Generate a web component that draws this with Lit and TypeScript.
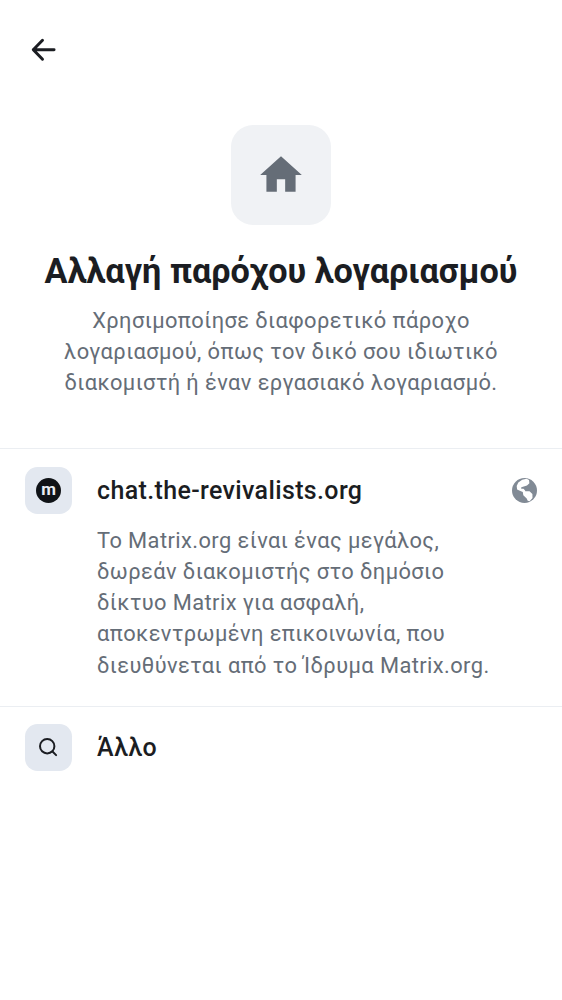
import { LitElement, html, css } from "lit";
import { customElement } from "lit/decorators.js";

@customElement("app-root")
export class AppRoot extends LitElement {
  static styles = css`
    :host {
      display: block;
      min-height: 1000px;
      background: #fff;
      color: #1b1d22;
      font-family: Roboto, "Noto Sans", sans-serif;
    }
    svg { display: block; }
    .bar { height: 100px; padding-left: 25px; display: flex; align-items: center; }
    .back { border: 0; padding: 0; background: none; color: inherit; }
    .header { display: flex; flex-direction: column; align-items: center; padding-top: 25px; height: 323px; text-align: center; }
    .tile { width: 100px; height: 100px; border-radius: 22px; background: #f0f2f5; color: #656d77; display: flex; align-items: center; justify-content: center; }
    .title { margin: 25px 0 0; font-size: 34.22px; line-height: 43.7px; font-weight: 700; white-space: nowrap; }
    .body { margin: 0; font-size: 21.86px; line-height: 31.3px; letter-spacing: 0.41px; color: #656d77; white-space: nowrap; }
    .header .body { margin-top: 11px; }
    .item { border-top: 1px solid #ebeef2; padding: 17.5px 25px 0; }
    .item + .item { padding-top: 17px; }
    .row { display: flex; align-items: center; height: 47px; }
    .badge { width: 47px; height: 47px; border-radius: 12.5px; background: #e3e8f0; display: flex; align-items: center; justify-content: center; margin-right: 25px; }
    .logo { width: 25px; height: 25px; border-radius: 50%; background: #101317; color: #e9edf3; display: flex; align-items: center; justify-content: center; font-size: 17px; line-height: 21px; font-weight: 700; }
    .logo span { margin-top: -2px; }
    .name { flex: 1; padding-top: 1px; font-size: 24.98px; line-height: 38px; font-weight: 500; letter-spacing: 0.37px; }
    .item .body { padding: 11px 0 25px 72px; }
  `;

  render() {
    return html`
      <div class="bar">
        <button class="back" aria-label="Πίσω">
          <svg width="37.5" height="37.5" viewBox="0 0 24 24" fill="none" stroke="currentColor" stroke-width="1.9" stroke-linecap="round" stroke-linejoin="round">
            <path d="M11.2 5.9 5.3 12l5.9 6.1M5.3 12h13.3" />
          </svg>
        </button>
      </div>
      <header class="header">
        <div class="tile">
          <svg width="50" height="50" viewBox="0 0 24 24" fill="currentColor"><path d="M10 20v-6h4v6h5v-8h3L12 3 2 12h3v8z" /></svg>
        </div>
        <h1 class="title">Αλλαγή παρόχου λογαριασμού</h1>
        <p class="body">Χρησιμοποίησε διαφορετικό πάροχο<br />λογαριασμού, όπως τον δικό σου ιδιωτικό<br />διακομιστή ή έναν εργασιακό λογαριασμό.</p>
      </header>
      <section class="item">
        <div class="row">
          <div class="badge"><div class="logo"><span>m</span></div></div>
          <div class="name">chat.the-revivalists.org</div>
          <svg width="25" height="25" viewBox="0 0 25 25">
            <circle cx="12.5" cy="12.5" r="12.5" fill="#818a95" />
            <path fill="#fff" d="M5.1 11.4 4.7 7.9 6.3 4.4 10.2 1.8 14.6.8l2.4 1.2.4 3.3-2.4 2.3-3.2.8-2.5.9-.1 1.4 2.3.1 1.6 1.8.2.6 4.2.1 2.9 2.6.1 4.1-2.9 3.2-1.9-.4-1-2.4-3.4-3.2-.5-3.2-2.4-.9z" />
          </svg>
        </div>
        <p class="body">Το Matrix.org είναι ένας μεγάλος,<br />δωρεάν διακομιστής στο δημόσιο<br />δίκτυο Matrix για ασφαλή,<br />αποκεντρωμένη επικοινωνία, που<br />διευθύνεται από το Ίδρυμα Matrix.org.</p>
      </section>
      <section class="item">
        <div class="row">
          <div class="badge">
            <svg width="25" height="25" viewBox="0 0 25 25" fill="none" stroke="#1b1d22" stroke-width="2" stroke-linecap="round"><circle cx="11.2" cy="11.2" r="7.2" /><path d="m16.5 16.5 3.6 3.6" /></svg>
          </div>
          <div class="name">Άλλο</div>
        </div>
      </section>
    `;
  }
}
